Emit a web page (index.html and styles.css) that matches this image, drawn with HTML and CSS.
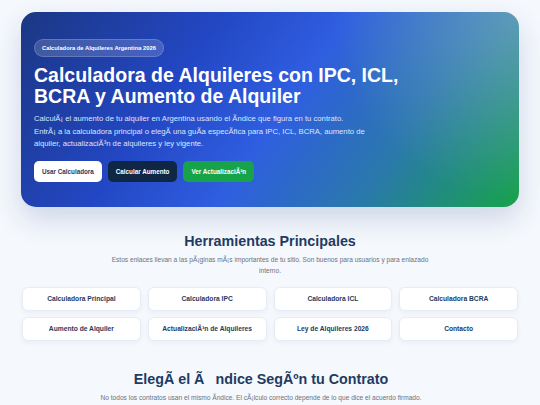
FILE: index.html
```html
<!DOCTYPE html>
<html lang="es">
<head>
<meta charset="utf-8">
<title>Calculadora de Alquileres</title>
<link rel="stylesheet" href="styles.css">
</head>
<body>
<div class="page">
  <section class="hero">
    <span class="badge">Calculadora de Alquileres Argentina 2026</span>
    <h1 class="hero-title">Calculadora de Alquileres con IPC, ICL, BCRA y Aumento de Alquiler</h1>
    <p class="hero-text">CalculÃ¡ el aumento de tu alquiler en Argentina usando el Ã­ndice que figura en tu contrato.<br>EntrÃ¡ a la calculadora principal o elegÃ­ una guÃ­a especÃ­fica para IPC, ICL, BCRA, aumento de alquiler, actualizaciÃ³n de alquileres y ley vigente.</p>
    <div class="hero-actions">
      <a class="btn btn-white" href="#">Usar Calculadora</a>
      <a class="btn btn-dark" href="#">Calcular Aumento</a>
      <a class="btn btn-green" href="#">Ver ActualizaciÃ³n</a>
    </div>
  </section>

  <section class="tools">
    <h2 class="section-title">Herramientas Principales</h2>
    <p class="section-text">Estos enlaces llevan a las pÃ¡ginas mÃ¡s importantes de tu sitio. Son buenos para usuarios y para enlazado interno.</p>
    <div class="tool-grid">
      <a class="tool" href="#">Calculadora Principal</a>
      <a class="tool" href="#">Calculadora IPC</a>
      <a class="tool" href="#">Calculadora ICL</a>
      <a class="tool" href="#">Calculadora BCRA</a>
      <a class="tool" href="#">Aumento de Alquiler</a>
      <a class="tool" href="#">ActualizaciÃ³n de Alquileres</a>
      <a class="tool" href="#">Ley de Alquileres 2026</a>
      <a class="tool" href="#">Contacto</a>
    </div>
  </section>

  <section class="index-section">
    <h2 class="section-title">ElegÃ­ el Ã&#x8D;ndice SegÃºn tu Contrato</h2>
    <p class="section-text wide">No todos los contratos usan el mismo Ã­ndice. El cÃ¡lculo correcto depende de lo que dice el acuerdo firmado.</p>
  </section>
</div>
</body>
</html>
```
FILE: styles.css
```css
* { box-sizing: border-box; }
html, body { margin: 0; padding: 0; }
body {
  background: #f5f8fc;
  font-family: "Liberation Sans", Arial, sans-serif;
  color: #1e3a5f;
}
.page {
  padding: 12px 21px 0;
}
.hero {
  border-radius: 15px;
  padding: 24px 13px 25px 13px;
  color: #fff;
  background:
    radial-gradient(circle at 100% 0%, rgba(160, 190, 220, 0.45), rgba(160, 190, 220, 0) 35%),
    linear-gradient(125deg, #1b3783 0%, #2347c4 32%, #2f5ee0 52%, #2a78ac 74%, #17a34a 100%);
  box-shadow: 0 12px 28px rgba(30, 58, 138, 0.18);
}
.badge {
  display: inline-block;
  font-size: 5.8px;
  font-weight: bold;
  line-height: 8px;
  padding: 4px 7px;
  border-radius: 999px;
  background: rgba(255, 255, 255, 0.16);
  border: 1px solid rgba(255, 255, 255, 0.18);
  color: #fff;
}
.hero-title {
  margin: 8px 0 0;
  font-size: 19.5px;
  line-height: 20.5px;
  font-weight: bold;
  max-width: 380px;
}
.hero-text {
  margin: 7px 0 0;
  font-size: 7.7px;
  line-height: 12.5px;
  color: #dce6fc;
  max-width: 340px;
}
.hero-actions {
  display: flex;
  gap: 6px;
  margin-top: 10px;
}
.btn {
  display: flex;
  align-items: center;
  height: 21px;
  padding: 0 8px;
  border-radius: 5px;
  font-size: 6.3px;
  font-weight: bold;
  text-decoration: none;
}
.btn-white { background: #fff; color: #1e3a5f; }
.btn-dark { background: #0f2744; color: #fff; }
.btn-green { background: #16a34a; color: #fff; }

.tools {
  margin-top: 26px;
  text-align: center;
}
.section-title {
  margin: 0;
  font-size: 14.3px;
  line-height: 17px;
  font-weight: bold;
  color: #1e3b63;
}
.section-text {
  margin: 4px auto 0;
  max-width: 330px;
  font-size: 6.6px;
  line-height: 11px;
  color: #6b7280;
}
.section-text.wide { max-width: 430px; }
.tool-grid {
  display: grid;
  grid-template-columns: repeat(4, 1fr);
  gap: 6px 7px;
  margin: 11px 1px 0;
}
.tool {
  display: flex;
  align-items: center;
  justify-content: center;
  height: 24px;
  background: #fff;
  border: 1px solid #e6edf6;
  border-radius: 6px;
  box-shadow: 0 2px 5px rgba(30, 58, 138, 0.05);
  font-size: 6.7px;
  font-weight: bold;
  color: #1e3a5f;
  text-decoration: none;
}
.index-section {
  margin-top: 30px;
  padding-right: 18px;
  text-align: center;
}
.index-section .section-text { margin-top: 4px; }
```
